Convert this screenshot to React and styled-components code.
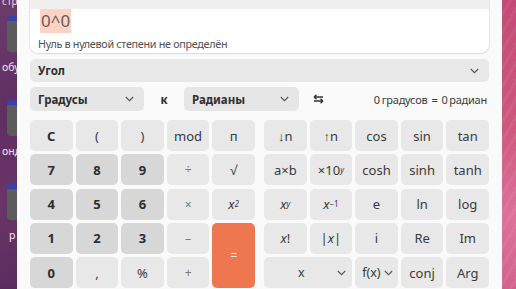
import React from "react";
import styled, { createGlobalStyle, css } from "styled-components";

const Global = createGlobalStyle`
  html, body { margin: 0; padding: 0; }
  body { width: 516px; height: 289px; overflow: hidden; font-family: "Noto Sans", "Open Sans", sans-serif; }
  #root { width: 516px; height: 289px; }
`;

const Desktop = styled.div`
  display: flex;
  width: 516px;
  height: 289px;
  overflow: hidden;
`;

const LeftStrip = styled.div`
  width: 17px;
  flex: none;
  overflow: hidden;
  background: linear-gradient(160deg, #6e3a6c 0%, #5f2f62 40%, #6a3469 70%, #5a2c5e 100%);
  display: flex;
  flex-direction: column;
  align-items: flex-start;
`;

const DeskTop = styled.div`
  height: 21px;
  margin-top: -5px;
  padding-left: 2px;
  color: #e6dbe6;
  font-size: 10px;
  line-height: 12px;
  white-space: nowrap;
`;

const DeskIcon = styled.div`
  width: 30px;
  height: 36px;
  margin-left: 7px;
  border-radius: 4px;
  background: linear-gradient(#3c3fa8 0 5px, #5c5c5c 5px);
  flex: none;
`;

const DeskLabel = styled.div`
  padding-left: ${(p) => p.$pl || 2}px;
  margin-top: 8px;
  height: ${(p) => p.$h || 40}px;
  color: #efe6ef;
  font-size: 10.5px;
  line-height: 14px;
  white-space: nowrap;
`;

const RightStrip = styled.div`
  flex: 1;
  background:
    repeating-linear-gradient(120deg, rgba(255,255,255,0.0) 0 6px, rgba(255,255,255,0.06) 6px 9px),
    linear-gradient(180deg, #c24a74 0%, #d0587f 45%, #dd7199 75%, #d2628c 100%);
`;

const Window = styled.div`
  width: 485px;
  flex: none;
  background: #fafafa;
  padding: 0 13px;
  box-sizing: border-box;
  display: flex;
  flex-direction: column;
`;

const Display = styled.div`
  background: #ffffff;
  border-radius: 0 0 8px 8px;
  box-shadow: 0 0 0 1px rgba(0,0,0,0.06), 0 1px 2px rgba(0,0,0,0.08);
  display: flex;
  flex-direction: column;
  height: 53px;
  overflow: hidden;
`;

const DisplayHead = styled.div`
  height: 9px;
  background: #f0f0f0;
`;

const DisplayBody = styled.div`
  padding: 0 10px;
  display: flex;
  flex-direction: column;
  align-items: flex-start;
`;

const Expr = styled.span`
  background: #fdd3c6;
  color: #6b5b57;
  font-size: 17px;
  line-height: 24px;
  height: 24px;
  padding: 0 1px;
`;

const ErrorText = styled.div`
  margin-top: 4px;
  font-size: 10.8px;
  line-height: 14px;
  color: #505050;
  margin-left: -2px;
  letter-spacing: -0.3px;
`;

const Bar = styled.div`
  margin-top: 6px;
  height: 23px;
  border-radius: 5px;
  background: #e8e8e8;
  display: flex;
  align-items: center;
  justify-content: space-between;
  padding: 0 10px 0 8px;
  font-size: 11.5px;
  font-weight: 700;
  color: #2e2e2e;
`;

const Row = styled.div`
  margin-top: 5px;
  height: 24px;
  display: flex;
  align-items: center;
`;

const Select = styled.div`
  width: ${(p) => p.$w}px;
  height: 24px;
  border-radius: 5px;
  background: #e6e6e6;
  display: flex;
  align-items: center;
  justify-content: space-between;
  padding: 0 10px 0 8px;
  box-sizing: border-box;
  font-size: 11.5px;
  font-weight: 700;
  color: #2e2e2e;
  flex: none;
`;

const To = styled.div`
  width: 40px;
  text-align: center;
  font-size: 11.5px;
  font-weight: 700;
  color: #2e2e2e;
  flex: none;
`;

const SwapBox = styled.div`
  width: 38px;
  display: flex;
  justify-content: center;
  flex: none;
`;

const Result = styled.div`
  flex: 1;
  text-align: right;
  font-size: 11px;
  color: #3a3a3a;
  padding-right: 2px;
  white-space: nowrap;
  letter-spacing: -0.25px;
`;

const Eq = styled.span`
  margin: 0 4px;
`;

const Pads = styled.div`
  margin-top: 9px;
  display: flex;
  gap: 9px;
`;

const Grid = styled.div`
  flex: 1;
  display: grid;
  grid-template-columns: repeat(5, 1fr);
  grid-auto-rows: 31px;
  column-gap: 3px;
  row-gap: 3.25px;
`;

const Key = styled.div`
  border-radius: 5px;
  background: #e8e8e8;
  color: #3a3a3a;
  font-size: 13px;
  display: flex;
  align-items: center;
  justify-content: center;
  white-space: nowrap;
  ${(p) => p.$span && css`grid-column: span ${p.$span};`}
  ${(p) => p.$rows && css`grid-row: span ${p.$rows};`}
  ${(p) =>
    p.$kind === "digit" &&
    css`
      background: #d7d7d7;
      font-weight: 700;
      color: #2e2e2e;
    `}
  ${(p) =>
    p.$kind === "bold" &&
    css`
      font-weight: 700;
      color: #2e2e2e;
    `}
  ${(p) =>
    p.$kind === "op" &&
    css`
      color: #7a7a7a;
      font-size: 12px;
    `}
  ${(p) =>
    p.$kind === "eq" &&
    css`
      background: #ee7750;
      color: #ffe9e0;
      font-size: 13px;
    `}
  ${(p) =>
    p.$drop &&
    css`
      justify-content: space-between;
      padding: 0 ${p.$padR}px 0 ${p.$padL}px;
      font-size: 12.5px;
    `}
`;

const I = styled.i`
  font-style: italic;
  font-size: 13px;
`;

const Sup = styled.sup`
  font-size: 8px;
  line-height: 0;
  vertical-align: 6px;
  font-style: ${(p) => (p.$it ? "italic" : "normal")};
`;

const Chevron = ({ color = "#555" }) => (
  <svg width="9" height="6" viewBox="0 0 9 6">
    <path d="M0.8 1 L4.5 4.7 L8.2 1" fill="none" stroke={color} strokeWidth="1.1" />
  </svg>
);

const Swap = () => (
  <svg width="11" height="10" viewBox="0 0 11 10">
    <path d="M1 3 H10 M1 3 L3.5 0.8 M1 3 L3.5 5.2" fill="none" stroke="#333" strokeWidth="1.3" />
    <path d="M10 7 H1 M10 7 L7.5 4.8 M10 7 L7.5 9.2" fill="none" stroke="#333" strokeWidth="1.3" />
  </svg>
);

export default function App() {
  return (
    <>
      <Global />
      <Desktop>
        <LeftStrip>
          <DeskTop>стро</DeskTop>
          <DeskIcon />
          <DeskLabel>обу</DeskLabel>
          <DeskIcon />
          <DeskLabel $pl={0}>онд</DeskLabel>
          <DeskIcon />
          <DeskLabel $pl={9}>р</DeskLabel>
        </LeftStrip>
        <Window>
          <Display>
            <DisplayHead />
            <DisplayBody>
              <Expr>0^0</Expr>
              <ErrorText>Нуль в нулевой степени не определён</ErrorText>
            </DisplayBody>
          </Display>
          <Bar>
            <span>Угол</span>
            <Chevron />
          </Bar>
          <Row>
            <Select $w={114}>
              <span>Градусы</span>
              <Chevron />
            </Select>
            <To>к</To>
            <Select $w={115}>
              <span>Радианы</span>
              <Chevron />
            </Select>
            <SwapBox>
              <Swap />
            </SwapBox>
            <Result>
              0&#8239;градусов<Eq>=</Eq>0&#8239;радиан
            </Result>
          </Row>
          <Pads>
            <Grid>
              <Key $kind="bold">C</Key>
              <Key>(</Key>
              <Key>)</Key>
              <Key>mod</Key>
              <Key>п</Key>
              <Key $kind="digit">7</Key>
              <Key $kind="digit">8</Key>
              <Key $kind="digit">9</Key>
              <Key $kind="op">÷</Key>
              <Key>√</Key>
              <Key $kind="digit">4</Key>
              <Key $kind="digit">5</Key>
              <Key $kind="digit">6</Key>
              <Key $kind="op">×</Key>
              <Key>
                <I>x</I>
                <Sup $it>2</Sup>
              </Key>
              <Key $kind="digit">1</Key>
              <Key $kind="digit">2</Key>
              <Key $kind="digit">3</Key>
              <Key $kind="op">–</Key>
              <Key $kind="eq" $rows={2}>=</Key>
              <Key $kind="digit">0</Key>
              <Key>,</Key>
              <Key>%</Key>
              <Key $kind="op">+</Key>
            </Grid>
            <Grid>
              <Key>↓n</Key>
              <Key>↑n</Key>
              <Key>cos</Key>
              <Key>sin</Key>
              <Key>tan</Key>
              <Key>a×b</Key>
              <Key>
                ×10<Sup $it>y</Sup>
              </Key>
              <Key>cosh</Key>
              <Key>sinh</Key>
              <Key>tanh</Key>
              <Key>
                <I>x</I>
                <Sup $it>y</Sup>
              </Key>
              <Key>
                <I>x</I>
                <Sup>−1</Sup>
              </Key>
              <Key>e</Key>
              <Key>ln</Key>
              <Key>log</Key>
              <Key>
                <I>x</I>!
              </Key>
              <Key>
                |<I>x</I>|
              </Key>
              <Key>i</Key>
              <Key>Re</Key>
              <Key>Im</Key>
              <Key $span={2} $drop $padL={34} $padR={6}>
                <span>x</span>
                <Chevron />
              </Key>
              <Key $drop $padL={7} $padR={5}>
                <span>f(x)</span>
                <Chevron />
              </Key>
              <Key>conj</Key>
              <Key>Arg</Key>
            </Grid>
          </Pads>
        </Window>
        <RightStrip />
      </Desktop>
    </>
  );
}
